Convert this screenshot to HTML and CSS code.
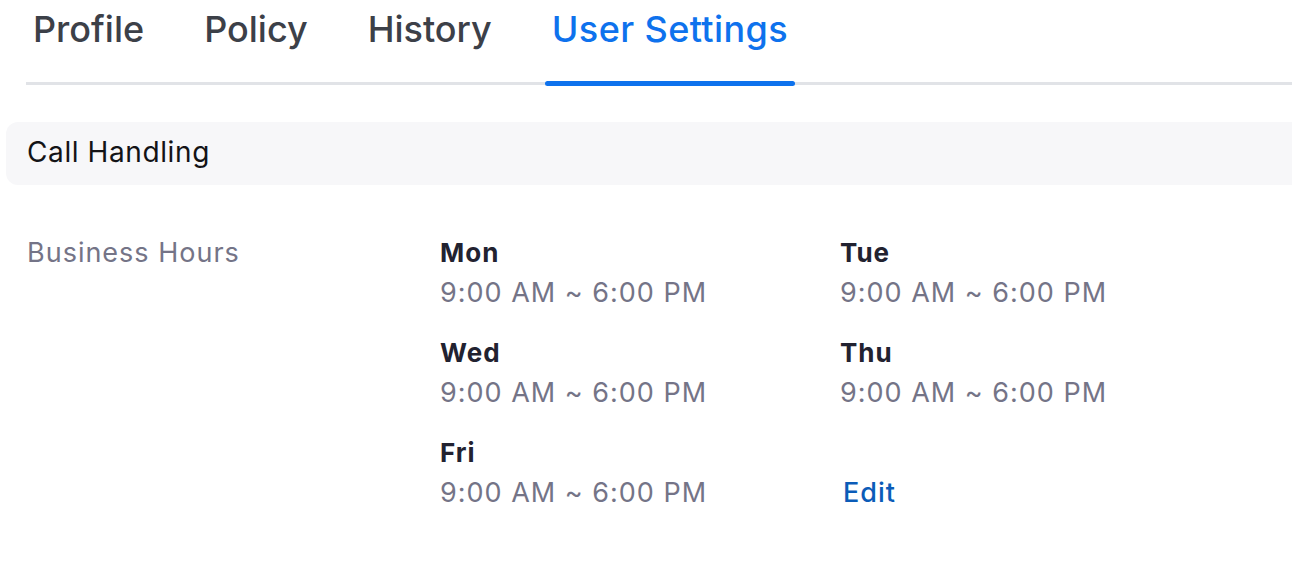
FILE: index.html
```html
<!DOCTYPE html>
<html>
<head>
<meta charset="utf-8">
<link rel="stylesheet" href="styles.css">
</head>
<body>
<nav class="tabs">
  <div class="tab">Profile</div>
  <div class="tab">Policy</div>
  <div class="tab">History</div>
  <div class="tab active">User Settings</div>
</nav>
<div class="section-bar">Call Handling</div>
<div class="setting">
  <div class="setting-label">Business Hours</div>
  <div class="days">
    <div class="day"><div class="day-name">Mon</div><div class="day-time">9:00 AM ~ 6:00 PM</div></div>
    <div class="day"><div class="day-name">Tue</div><div class="day-time">9:00 AM ~ 6:00 PM</div></div>
    <div class="day"><div class="day-name">Wed</div><div class="day-time">9:00 AM ~ 6:00 PM</div></div>
    <div class="day"><div class="day-name">Thu</div><div class="day-time">9:00 AM ~ 6:00 PM</div></div>
    <div class="day"><div class="day-name">Fri</div><div class="day-time">9:00 AM ~ 6:00 PM</div></div>
    <div class="day edit-cell"><a class="edit">Edit</a></div>
  </div>
</div>
</body>
</html>
```
FILE: styles.css
```css
html, body {
  margin: 0;
  padding: 0;
  background: #ffffff;
  overflow: hidden;
}
body {
  font-family: Inter, "Liberation Sans", sans-serif;
  width: 1292px;
  height: 566px;
}
.tabs {
  display: flex;
  gap: 46px;
  margin-left: 26px;
  height: 82px;
  border-bottom: 3px solid #e1e3e7;
}
.tab {
  position: relative;
  padding: 6px 7px 0;
  font-size: 36px;
  line-height: 46px;
  font-weight: 500;
  color: #3c4048;
}
.tab.active {
  color: #0e72ed;
  letter-spacing: 0.4px;
}
.tab.active::after {
  content: "";
  position: absolute;
  left: 0;
  right: 0;
  bottom: -4px;
  height: 5px;
  border-radius: 3px;
  background: #0e72ed;
}
.section-bar {
  margin: 37px -40px 0 6px;
  height: 63px;
  padding: 0 0 3px 21px;
  box-sizing: border-box;
  display: flex;
  align-items: center;
  background: #f7f7f9;
  border-radius: 12px;
  font-size: 28px;
  letter-spacing: 0.6px;
  color: #131316;
}
.setting {
  display: flex;
  margin-top: 48px;
  padding-left: 27px;
}
.setting-label {
  width: 413px;
  font-size: 27px;
  line-height: 40px;
  letter-spacing: 1px;
  color: #747487;
}
.days {
  display: grid;
  grid-template-columns: 400px 400px;
  row-gap: 20px;
}
.day-name {
  font-size: 26px;
  line-height: 40px;
  font-weight: 700;
  letter-spacing: 1px;
  color: #222230;
}
.day-time {
  font-size: 27px;
  line-height: 40px;
  letter-spacing: 1px;
  color: #747487;
}
.edit-cell {
  display: flex;
  align-items: flex-end;
}
.edit {
  font-size: 27px;
  line-height: 40px;
  font-weight: 500;
  letter-spacing: 1px;
  color: #0b5cb8;
  padding-left: 3px;
}
```
